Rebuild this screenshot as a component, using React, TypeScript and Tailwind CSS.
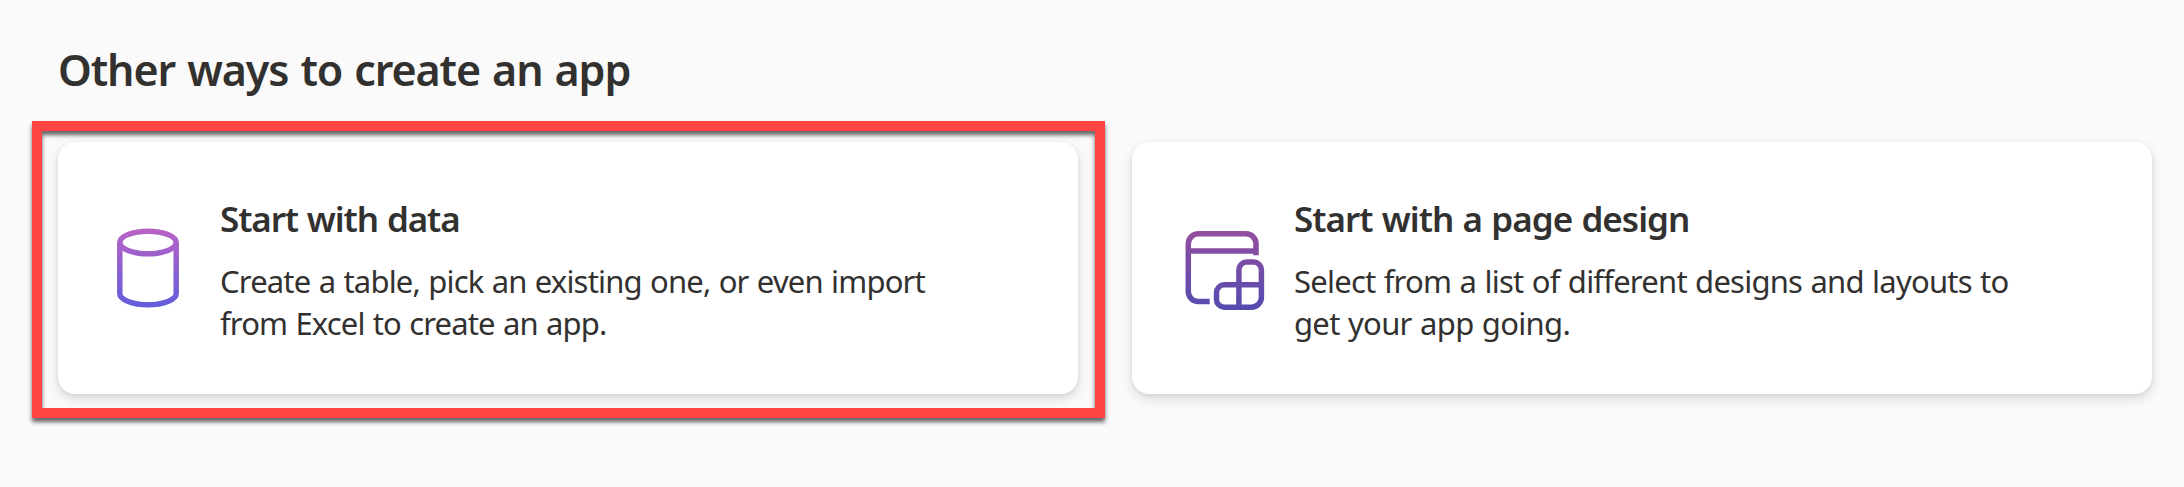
import type { ReactNode } from "react";

function DataIcon() {
  return (
    <svg className="block h-[90px] w-[90px] shrink-0" viewBox="0 0 90 90" fill="none">
      <defs>
        <linearGradient id="data-stroke" x1="0" y1="2" x2="0" y2="81" gradientUnits="userSpaceOnUse">
          <stop offset="0" stopColor="#bb62c4" />
          <stop offset="1" stopColor="#625edb" />
        </linearGradient>
      </defs>
      <g stroke="url(#data-stroke)" strokeWidth="5.5">
        <ellipse cx="40" cy="16.5" rx="28.2" ry="11.3" />
        <path d="M11.8 16.5V67.5C11.8 73.7 24.4 78.8 40 78.8S68.2 73.7 68.2 67.5V16.5" />
      </g>
    </svg>
  );
}

function PageDesignIcon() {
  return (
    <svg className="block h-[90px] w-[90px] shrink-0" viewBox="0 0 90 90" fill="none">
      <defs>
        <linearGradient id="page-stroke" x1="0" y1="5" x2="0" y2="84" gradientUnits="userSpaceOnUse">
          <stop offset="0" stopColor="#944e9f" />
          <stop offset="1" stopColor="#524bb0" />
        </linearGradient>
      </defs>
      <g stroke="url(#page-stroke)" strokeWidth="5.5">
        <path d="M27.7 75.5H16.3A10 10 0 0 1 6.3 65.5V17.8A10 10 0 0 1 16.3 7.8H64A10 10 0 0 1 74 17.8V29.2" />
        <path d="M6.3 25.1H74" />
        <path d="M56.9 81.2V43.9A7.8 7.8 0 0 1 64.7 36.1H71.6A7.8 7.8 0 0 1 79.4 43.9V71.2A10 10 0 0 1 69.4 81.2H42.3A7.8 7.8 0 0 1 34.5 73.4V66.6A7.8 7.8 0 0 1 42.3 58.8H79.4" />
      </g>
    </svg>
  );
}

type CardProps = { icon: ReactNode; title: ReactNode; lines: ReactNode };

function OptionCard({ icon, title, lines }: CardProps) {
  return (
    <div className="flex h-[252px] w-[1020px] rounded-[17px] bg-white pt-[84px] pl-[50px] shadow-[0_5px_12px_rgba(0,0,0,0.13),0_1px_4px_rgba(0,0,0,0.07)]">
      {icon}
      <div className="-mt-[32px] ml-[22px] whitespace-nowrap">
        <h2 className="h-[66px] text-[35px] leading-[50px] font-semibold [word-spacing:1px]">{title}</h2>
        <p className="text-[31px] leading-[42px] [word-spacing:1px]">{lines}</p>
      </div>
    </div>
  );
}

export default function App() {
  return (
    <main className="h-[487px] w-[2184px] overflow-hidden bg-[#fafafa] pt-[40px] pl-[58px] font-['Noto_Sans','Open_Sans',sans-serif] text-[#323130]">
      <h1 className="h-[102px] text-[43px] leading-[60px] font-semibold whitespace-nowrap [word-spacing:2px]">
        <span className="tracking-[-1.1px]">Other ways to create an app</span>
      </h1>
      <div className="flex gap-[54px]">
        <div className="relative">
          <OptionCard
            icon={<DataIcon />}
            title={<span className="tracking-[-1.1px]">Start with data</span>}
            lines={
              <>
                <span className="tracking-[-0.82px]">Create a table, pick an existing one, or even import</span>
                <br />
                <span className="tracking-[-0.85px]">from Excel to create an app.</span>
              </>
            }
          />
          <div className="pointer-events-none absolute -top-[21px] -left-[26px] h-[297px] w-[1073px] border-10 border-[#ff4444] drop-shadow-[0_4px_2px_rgba(0,0,0,0.6)]" />
        </div>
        <OptionCard
          icon={<PageDesignIcon />}
          title={<span className="tracking-[-0.95px]">Start with a page design</span>}
          lines={
            <>
              <span className="tracking-[-0.77px]">Select from a list of different designs and layouts to</span>
              <br />
              <span className="tracking-[-0.7px]">get your app going.</span>
            </>
          }
        />
      </div>
    </main>
  );
}
